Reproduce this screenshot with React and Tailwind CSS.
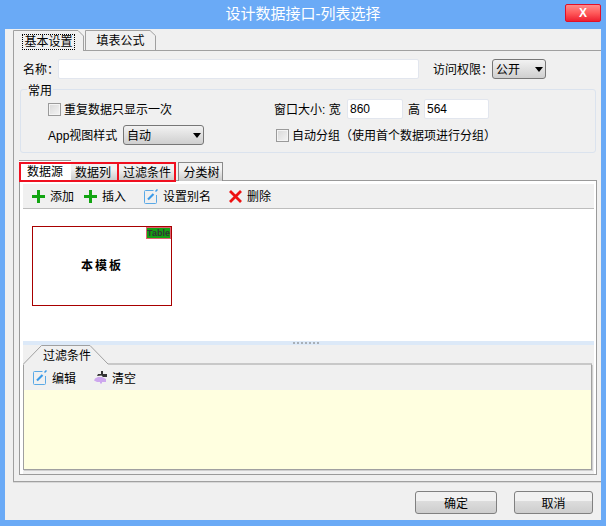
import React from "react";

const Plus = () => (
  <svg width="13" height="13" viewBox="0 0 13 13" className="shrink-0"><path d="M5 0h3v5h5v3H8v5H5V8H0V5h5z" fill="#12a512" /></svg>
);
const Cross = () => (
  <svg width="13" height="13" viewBox="0 0 13 13" className="shrink-0"><path d="M1 1 12 12M12 1 1 12" stroke="#ee1111" strokeWidth="2.800" fill="none" /></svg>
);
const Edit = () => (
  <svg width="14" height="15" viewBox="0 0 14 15" className="shrink-0">
    <path d="M9.500 1.500H1.500a1 1 0 0 0-1 1v11a1 1 0 0 0 1 1h10a1 1 0 0 0 1-1V6" stroke="#5aa9e6" fill="none" />
    <path d="M4 10.500 9.500 5" stroke="#3a9ae8" strokeWidth="2.200" fill="none" />
    <path d="M11.500 2.500 13.500 0.500" stroke="#3a9ae8" strokeWidth="1.500" fill="none" />
  </svg>
);
const Clear = () => (
  <svg width="13" height="14" viewBox="0 0 13 14" className="shrink-0">
    <path d="M7 0h2v3h4v3H9L7.500 4.500 3 5 4 3h3z" fill="#333" />
    <path d="M1 7.500 4 6h4l4 2v3H8v1.500H6V11H3L0 9.500z" fill="#cda7ee" />
  </svg>
);
const Caret = () => (
  <svg width="8" height="5" viewBox="0 0 8 5" className="shrink-0"><path d="M0 0h8L4 5z" fill="#000" /></svg>
);

const Check = () => (
  <span className="block w-[13px] h-[13px] border border-[#9a9a9a] bg-[linear-gradient(135deg,#d8d8d8,#f4f4f4)] shadow-[inset_0_0_0_1px_#f4f4f4] shrink-0" />
);

const Input = ({ className, children }) => (
  <div className={"h-[20px] bg-white border border-[#e2e6ee] rounded-[2px] text-[12px] leading-[18px] pl-[2px] text-[#000] " + className}>{children}</div>
);

const Select = ({ className, children }) => (
  <div className={"h-[20px] rounded-[3px] border border-[#777] bg-[linear-gradient(#f2f2f2,#cfcfcf)] flex items-center justify-between pl-[3px] pr-[2px] text-[12px] " + className}>
    <span className="pt-[2px]">{children}</span>
    <Caret />
  </div>
);

const TopTab = ({ children, active }) => (
  <div className={"relative w-[71px] flex items-center justify-center text-[12px] " + (active ? "h-[21px] z-10" : "h-[20px]")}>
    <svg className="absolute inset-0 w-full h-full" viewBox="0 0 71 21" preserveAspectRatio="none">
      <path d="M0.500 21V0.500H65L70.500 6V21" fill="#f0f0f0" stroke="#a0a0a0" strokeWidth="1" vectorEffect="non-scaling-stroke" />
    </svg>
    <span className={"relative top-px px-px leading-[14px] " + (active ? "outline-1 outline-dotted outline-black" : "")}>{children}</span>
  </div>
);

const SubTab = ({ w, children }) => (
  <div className={"h-[19px] pt-[2px] flex items-center justify-center text-[12px] border-t border-r border-[#8a8a8a] bg-[linear-gradient(#f2f2f2,#f2f2f2_35%,#c9c9c9)] " + w}>{children}</div>
);

const Tool = ({ icon, children, className }) => (
  <div className={"flex items-center gap-[5px] text-[12px] " + (className || "")}>{icon}<span className="pt-[2px]">{children}</span></div>
);

const Btn = ({ w, className, children }) => (
  <div className={"h-[23px] pt-[2px] rounded-[3px] border border-[#808080] flex items-center justify-center text-[12px] bg-[linear-gradient(#f1f1f1,#f1f1f1_45%,#dcdcdc_45%,#cdcdcd)] " + w + " " + (className || "")}>{children}</div>
);

export default function App() {
  return (
    <div className="w-[606px] h-[526px] bg-[#6aaaf6] flex flex-col overflow-hidden text-black font-['Liberation_Sans','Noto_Sans_CJK_SC',sans-serif]">
      <div className="relative h-[29px] shrink-0 flex items-center justify-center text-white text-[15px] pb-px">
        设计数据接口-列表选择
        <div className="absolute left-[565px] top-[4px] w-[36px] h-[18px] rounded-[2px] border border-[#e01028] bg-[linear-gradient(#ff8a8a,#ff5a5a_50%,#ee2030)] flex items-center justify-center text-white font-bold text-[12px]">X</div>
      </div>

      <div className="mx-[5px] h-[491px] bg-[#f0f0f0] flex flex-col">
        <div className="pl-[8px] pt-px flex items-start gap-px h-[22px] shrink-0">
          <TopTab active>基本设置</TopTab>
          <TopTab>填表公式</TopTab>
        </div>

        <div className="ml-[8px] h-[432px] shrink-0 border-l border-b border-t -mt-px border-[#a0a0a0] shadow-[0_1px_0_#d8d8d8] flex flex-col">
          <div className="flex items-center h-[20px] mt-[8px] pl-[9px] shrink-0">
            <span className="text-[12px] w-[35px] pt-[2px] whitespace-nowrap">名称：</span>
            <Input className="w-[361px]" />
            <span className="text-[12px] ml-[14px] w-[59px] pt-[2px] whitespace-nowrap">访问权限：</span>
            <Select className="w-[54px]">公开</Select>
          </div>

          <div className="relative ml-[6px] mt-[10px] w-[576px] h-[64px] shrink-0 border border-[#dbe3ee] rounded-[3px] flex flex-col pl-[27px]">
            <span className="absolute left-[6px] -top-[6px] bg-[#f0f0f0] px-px text-[12px] leading-[14px]">常用</span>
            <div className="flex items-center h-[20px] mt-[9px]">
              <Check />
              <span className="text-[12px] ml-[3px] pt-[2px] w-[210px]">重复数据只显示一次</span>
              <span className="text-[12px] w-[73px] pt-[2px] whitespace-nowrap">窗口大小: 宽</span>
              <Input className="w-[56px]">860</Input>
              <span className="text-[12px] ml-[5px] pt-[2px] w-[16px]">高</span>
              <Input className="w-[65px]">564</Input>
            </div>
            <div className="flex items-center h-[20px] mt-[6px]">
              <span className="text-[12px] w-[75px] pt-[2px] whitespace-nowrap">App视图样式</span>
              <Select className="w-[81px]">自动</Select>
              <div className="ml-[72px]"><Check /></div>
              <span className="text-[12px] ml-[3px] pt-[2px]">自动分组（使用首个数据项进行分组）</span>
            </div>
          </div>

          <div className="relative ml-[5px] mt-[7px] flex items-end h-[21px] shrink-0 w-[578px]">
            <div className="h-[21px] w-[52px] pt-[2px] flex items-center justify-center text-[12px] border-t border-[#9a9a9a] bg-white">数据源</div>
            <SubTab w="w-[47px] pr-[2px]">数据列</SubTab>
            <SubTab w="w-[57px] pl-[2px]">过滤条件</SubTab>
            <div className="w-[3px] self-end border-b border-[#9a9a9a]" />
            <SubTab w="w-[45px] border-l pl-[2px]">分类树</SubTab>
            <div className="flex-1 border-b border-[#9a9a9a]" />
            <div className="absolute left-0 top-[2px] w-[157px] h-[20px] border-2 border-[#f01020] pointer-events-none">
              <div className="absolute left-[96px] top-0 bottom-0 w-[2px] bg-[#f01020]" />
            </div>
          </div>

          <div className="ml-[5px] w-[578px] h-[294px] shrink-0 border-r border-b border-l border-[#9a9a9a] bg-white flex flex-col pl-[3px] pr-[2px] pt-[3px]">
            <div className="h-[25px] shrink-0 bg-[#f0f0f0] border-b border-[#bdbdbd] flex items-center pl-[9px]">
              <Tool icon={<Plus />}>添加</Tool>
              <Tool icon={<Plus />} className="ml-[10px]">插入</Tool>
              <Tool icon={<Edit />} className="ml-[18px]">设置别名</Tool>
              <Tool icon={<Cross />} className="ml-[18px] gap-[4px]">删除</Tool>
            </div>
            <div className="h-[132px] shrink-0 pl-[9px] pt-[17px]">
              <div className="relative w-[140px] h-[80px] border border-[#a80000] flex items-center justify-center font-bold text-[12px] tracking-[2px] bg-white">
                本模板
                <div className="absolute right-0 top-0 w-[25px] h-[12px] bg-[#12a012] border border-[#e06070] text-[#333] text-[9px] leading-[10px] text-center tracking-normal overflow-hidden font-bold">Table</div>
              </div>
            </div>
            <div className="h-[4px] shrink-0 bg-[#dce9f8] flex items-center justify-center gap-[2px] pr-[5px]">
              {[0, 1, 2, 3, 4, 5, 6].map((i) => (
                <span key={i} className="w-[2px] h-[2px] bg-[#a8b0b8]" />
              ))}
            </div>
            <div className="flex-1 bg-[#f0f0f0] flex flex-col pr-[2px] pb-[4px]">
              <div className="relative h-[19px] shrink-0">
                <svg className="absolute left-0 top-0" width="569" height="20" viewBox="0 0 569 20">
                  <path d="M0.500 19 18.500 0.500H67L85 19H569" fill="none" stroke="#a0a0a0" />
                </svg>
                <span className="absolute left-[20px] top-[3px] text-[12px] leading-[16px]">过滤条件</span>
              </div>
              <div className="flex-1 border border-[#a0a0a0] border-t-transparent shadow-[1px_1px_0_#cfcfcf] flex flex-col">
                <div className="h-[25px] shrink-0 flex items-center pl-[9px]">
                  <Tool icon={<Edit />}>编辑</Tool>
                  <Tool icon={<Clear />} className="ml-[18px]">清空</Tool>
                </div>
                <div className="flex-1 bg-[#ffffe0]" />
              </div>
            </div>
          </div>
        </div>

        <div className="flex items-start pt-[9px] pl-[410px]">
          <Btn w="w-[82px]">确定</Btn>
          <Btn w="w-[79px]" className="ml-[17px]">取消</Btn>
        </div>
      </div>
    </div>
  );
}
